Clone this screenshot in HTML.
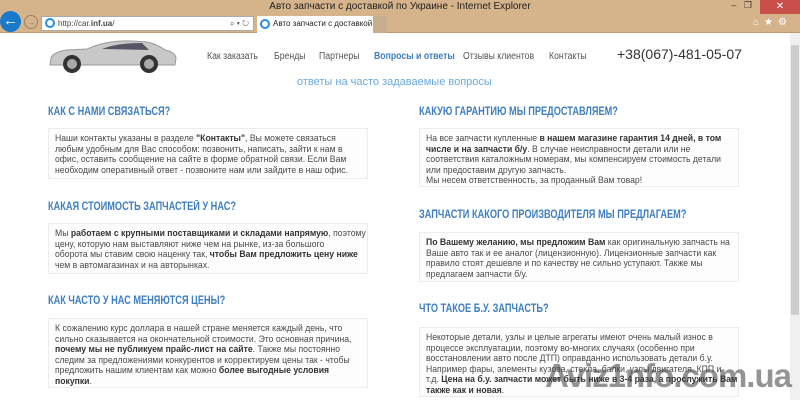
<!DOCTYPE html>
<html><head><meta charset="utf-8"><style>
*{margin:0;padding:0;box-sizing:border-box}
body{width:800px;height:400px;overflow:hidden;background:#fff;font-family:"Liberation Sans",sans-serif;position:relative}
.tb{position:absolute;left:0;top:0;width:800px;height:33px;background:#d5b48b;border-bottom:1px solid #c09a6e}
.title{position:absolute;top:1px;left:0;width:800px;text-align:center;font-size:10px;color:#222}
.back{position:absolute;left:0;top:11px;width:21px;height:21px;border-radius:50%;background:#1979ca;color:#fff;font-size:15px;line-height:20px;text-align:center;font-weight:bold}
.fwd{position:absolute;left:24px;top:15px;width:14px;height:14px;border-radius:50%;border:1px solid #a08060;color:#a08060;font-size:9px;line-height:12px;text-align:center}
.addr{position:absolute;left:41px;top:16px;width:213px;height:15px;background:#fff;border:1px solid #aaa;font-size:8px;line-height:13px;padding-left:16px;color:#444}
.tab{position:absolute;left:257px;top:16px;width:116px;height:17px;background:#fff;font-size:8px;line-height:16px;padding-left:16px;color:#222;white-space:nowrap;overflow:hidden}
.ie{position:absolute;width:10px;height:10px;border-radius:50%;border:2px solid #2a8ee0;top:3px;left:3px}
.ticons{position:absolute;right:8px;top:17px;font-size:10px;color:#fff;letter-spacing:5px}
.close{position:absolute;right:0;top:0;width:40px;height:14px;background:#c9504a;color:#fff;font-size:10px;text-align:center;line-height:14px}
.sb{position:absolute;left:790px;top:33px;width:10px;height:367px;background:#f0f0f0}
.thumb{position:absolute;left:791px;top:45px;width:8px;height:270px;background:#cdcdcd}
.nav{position:absolute;top:51px;font-size:10px;color:#555;white-space:nowrap;transform:scaleX(0.87);transform-origin:left}
.phone{position:absolute;left:617px;top:46px;font-size:14px;color:#333;white-space:nowrap}
.sub{position:absolute;left:297px;top:76px;font-size:11px;color:#6aa9dd;white-space:nowrap}
h2{position:absolute;font-size:11.5px;color:#3f7fbf;font-weight:bold;white-space:nowrap;transform:scaleX(0.8);transform-origin:left}
.box{position:absolute;border:1px solid #ececec;background:#fdfdfd;padding:5px 0 0 6px;overflow:hidden}
.box div{font-size:9.5px;line-height:10.5px;color:#4a4a4a;white-space:nowrap;transform:scaleX(0.91);transform-origin:left top}
.box b{color:#333}
.wm{position:absolute;left:545px;top:357px;font-size:33px;font-weight:bold;color:rgba(60,60,60,0.55);letter-spacing:-1px;white-space:nowrap}
</style></head><body>
<div class="tb">
<div class="title">Авто запчасти с доставкой по Украине - Internet Explorer</div>
<div class="close">✕</div>
<div style="position:absolute;right:48px;top:0;font-size:9px;color:#333">–&nbsp;&nbsp;&nbsp;❐</div>
<div class="back">←</div><div class="fwd">→</div>
<div class="addr"><span class="ie" style="top:1px;left:3px"></span>http://car.<b>inf.ua</b>/<span style="position:absolute;right:4px;color:#555">⌕ ▾ ↻</span></div>
<div class="tab"><span class="ie" style="top:3px"></span>Авто запчасти с доставкой... ✕</div>
<div style="position:absolute;left:373px;top:16px;width:14px;height:17px;background:#c7ad8b"></div>
<div class="ticons">⌂★⚙</div>
</div>
<div class="sb"></div><div class="thumb"></div>
<svg style="position:absolute;left:47px;top:38px" width="132" height="36" viewBox="0 0 132 36">
<path d="M4 20 Q6 14 20 12 L40 11 Q60 2 85 3 L100 4 Q110 6 118 12 Q128 14 129 20 L128 27 L3 27 Z" fill="#c8c8c8" stroke="#999"/>
<path d="M55 11 Q70 5 95 5 L102 12 Z" fill="#556"/>
<circle cx="25" cy="26" r="9" fill="#333"/><circle cx="25" cy="26" r="5" fill="#aaa"/>
<circle cx="102" cy="26" r="9" fill="#333"/><circle cx="102" cy="26" r="5" fill="#aaa"/>
</svg>
<div class="nav" style="left:207px">Как заказать</div>
<div class="nav" style="left:274px">Бренды</div>
<div class="nav" style="left:319px">Партнеры</div>
<div class="nav" style="left:374px;color:#3f7fbf;font-weight:bold">Вопросы и ответы</div>
<div class="nav" style="left:463px">Отзывы клиентов</div>
<div class="nav" style="left:549px">Контакты</div>
<div class="phone">+38(067)-481-05-07</div>
<div class="sub">ответы на часто задаваемые вопросы</div>

<h2 style="left:48px;top:106px">КАК С НАМИ СВЯЗАТЬСЯ?</h2>
<div class="box" style="left:48px;top:128px;width:320px;height:51px"><div>Наши контакты указаны в разделе <b>"Контакты"</b>, Вы можете связаться<br>любым удобным для Вас способом: позвонить, написать, зайти к нам в<br>офис, оставить сообщение на сайте в форме обратной связи. Если Вам<br>необходим оперативный ответ - позвоните нам или зайдите в наш офис.</div></div>
<h2 style="left:48px;top:201px">КАКАЯ СТОИМОСТЬ ЗАПЧАСТЕЙ У НАС?</h2>
<div class="box" style="left:48px;top:223px;width:320px;height:51px"><div>Мы <b>работаем с крупными поставщиками и складами напрямую</b>, поэтому<br>цену, которую нам выставляют ниже чем на рынке, из-за большого<br>оборота мы ставим свою наценку так, <b>чтобы Вам предложить цену ниже</b><br>чем в автомагазинах и на авторынках.</div></div>
<h2 style="left:48px;top:295px">КАК ЧАСТО У НАС МЕНЯЮТСЯ ЦЕНЫ?</h2>
<div class="box" style="left:48px;top:318px;width:320px;height:70px"><div>К сожалению курс доллара в нашей стране меняется каждый день, что<br>сильно сказывается на окончательной стоимости. Это основная причина,<br><b>почему мы не публикуем прайс-лист на сайте</b>. Также мы постоянно<br>следим за предложениями конкурентов и корректируем цены так - чтобы<br>предложить нашим клиентам как можно <b>более выгодные условия</b><br><b>покупки</b>.</div></div>

<h2 style="left:419px;top:106px">КАКУЮ ГАРАНТИЮ МЫ ПРЕДОСТАВЛЯЕМ?</h2>
<div class="box" style="left:419px;top:128px;width:320px;height:59px"><div>На все запчасти купленные <b>в нашем магазине гарантия 14 дней, в том</b><br><b>числе и на запчасти б/у</b>. В случае неисправности детали или не<br>соответствия каталожным номерам, мы компенсируем стоимость детали<br>или предоставим другую запчасть.<br>Мы несем ответственность, за проданный Вам товар!</div></div>
<h2 style="left:419px;top:209px">ЗАПЧАСТИ КАКОГО ПРОИЗВОДИТЕЛЯ МЫ ПРЕДЛАГАЕМ?</h2>
<div class="box" style="left:419px;top:232px;width:320px;height:50px"><div><b>По Вашему желанию, мы предложим Вам</b> как оригинальную запчасть на<br>Ваше авто так и ее аналог (лицензионную). Лицензионные запчасти как<br>правило стоят дешевле и по качеству не сильно уступают. Также мы<br>предлагаем запчасти б/у.</div></div>
<h2 style="left:419px;top:303px">ЧТО ТАКОЕ Б.У. ЗАПЧАСТЬ?</h2>
<div class="box" style="left:419px;top:327px;width:320px;height:70px"><div>Некоторые детали, узлы и целые агрегаты имеют очень малый износ в<br>процессе эксплуатации, поэтому во-многих случаях (особенно при<br>восстановлении авто после ДТП) оправданно использовать детали б.у.<br>Например фары, элементы кузова, стекла, балки, узлы двигателя, КПП и<br>т.д. <b>Цена на б.у. запчасти может быть ниже в 3-4 раза, а прослужить Вам</b><br><b>также как и новая</b>.</div></div>
<div class="wm">Aviz1nfo.com.ua</div>
</body></html>
